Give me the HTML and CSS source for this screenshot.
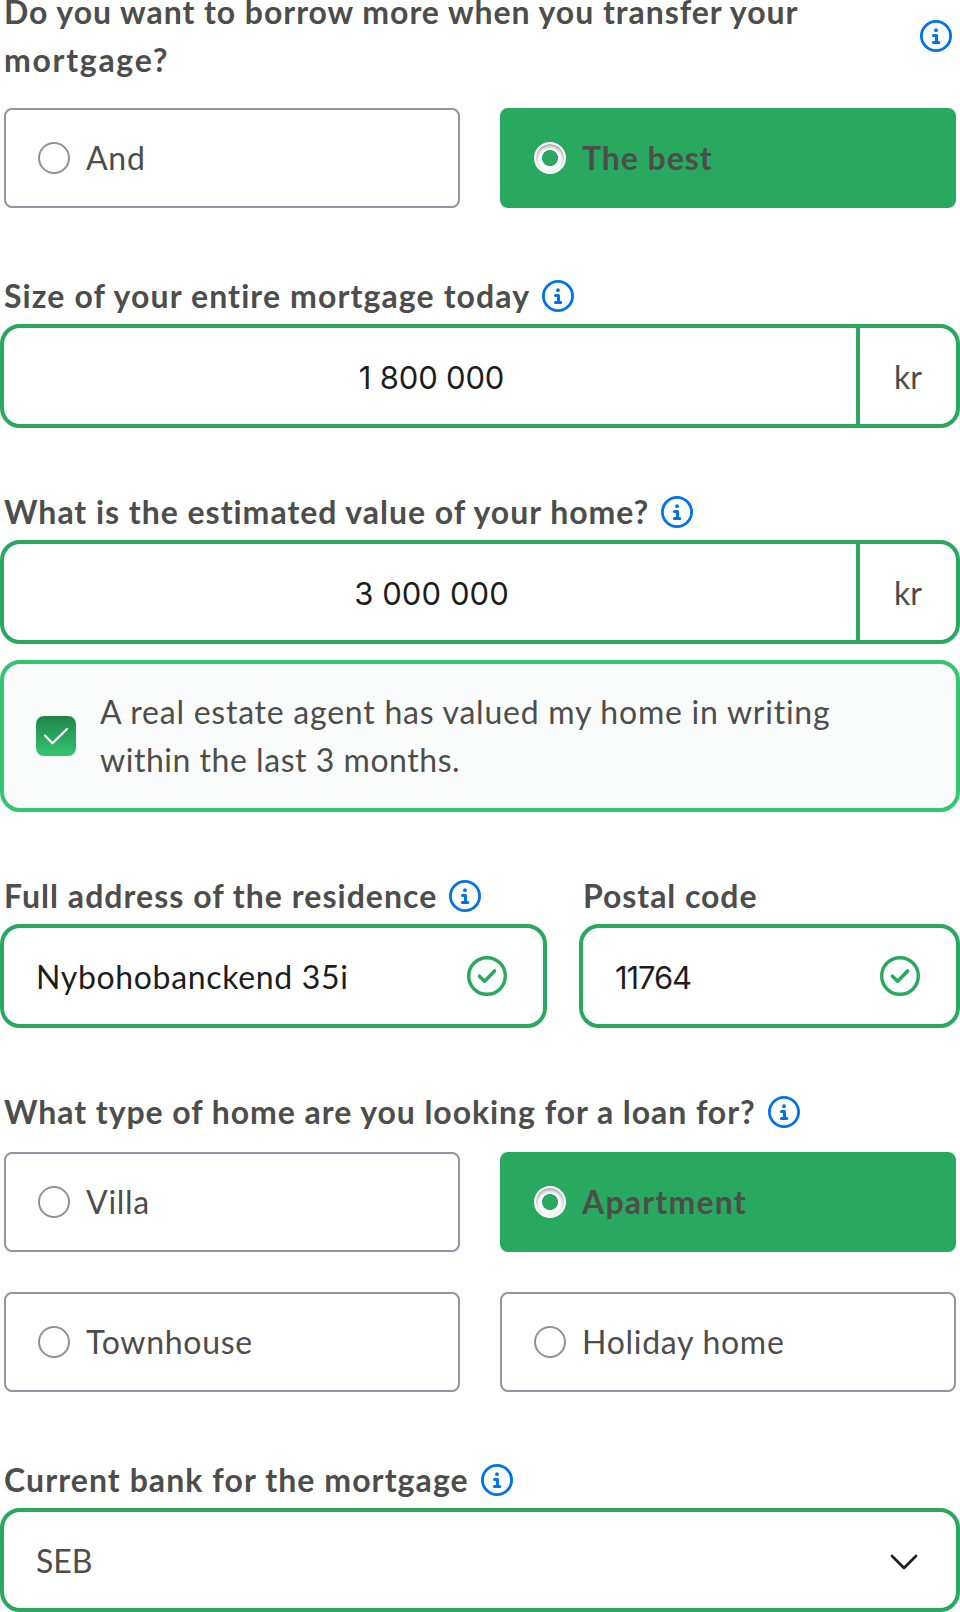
FILE: index.html
```html
<!DOCTYPE html>
<html lang="en">
<head>
<meta charset="utf-8">
<title>Mortgage application</title>
<link rel="stylesheet" href="styles.css">
</head>
<body>
<svg class="defs" width="0" height="0" aria-hidden="true">
  <symbol id="info" viewBox="0 0 32 32">
    <circle cx="16" cy="16" r="14.6" fill="none" stroke="currentColor" stroke-width="2.8"/>
    <circle cx="16" cy="10.2" r="1.9" fill="currentColor"/>
    <path d="M13.5 15.500h3v7M13.400 22.600h5.400" fill="none" stroke="currentColor" stroke-width="3" stroke-linecap="round" stroke-linejoin="round"/>
  </symbol>
  <symbol id="valid" viewBox="0 0 40 40">
    <circle cx="20" cy="20" r="18.3" fill="none" stroke="currentColor" stroke-width="3.4"/>
    <path d="M12.400 20.200l5.200 5L27.600 15" fill="none" stroke="currentColor" stroke-width="3.6" stroke-linecap="round" stroke-linejoin="round"/>
  </symbol>
</svg>
<main class="form">
  <section class="group">
    <div class="label label-wide"><span class="q-text"><span class="t-borrow">Do you want to borrow more when you transfer your</span><br><span class="t-mortgage">mortgage?</span></span><svg class="info"><use href="#info"/></svg></div>
    <div class="options options-first">
      <div class="option"><span class="radio"></span><span>And</span></div>
      <div class="option selected"><span class="radio"></span><span>The best</span></div>
    </div>
  </section>

  <section class="group after-options">
    <div class="label"><span class="t-size">Size of your entire mortgage today</span><svg class="info"><use href="#info"/></svg></div>
    <div class="field amount"><span class="number n-size">1 800 000</span><span class="unit">kr</span></div>
  </section>

  <section class="group">
    <div class="label"><span class="t-value">What is the estimated value of your home?</span><svg class="info"><use href="#info"/></svg></div>
    <div class="field amount"><span class="number n-value">3 000 000</span><span class="unit">kr</span></div>
    <div class="consent">
      <span class="checkbox"><svg viewBox="0 0 40 40" width="40" height="40"><path d="M9 19.500l7.500 7.800L31 13" fill="none" stroke="#fff" stroke-width="2.200" stroke-linecap="round" stroke-linejoin="round"/></svg></span>
      <span class="consent-text"><span class="t-agent">A real estate agent has valued my home in writing</span><br>within the last 3 months.</span>
    </div>
  </section>

  <section class="group address">
    <div>
      <div class="label"><span class="t-address">Full address of the residence</span><svg class="info"><use href="#info"/></svg></div>
      <div class="field text"><span class="entry">Nybohobanckend 35i</span><svg class="valid"><use href="#valid"/></svg></div>
    </div>
    <div>
      <div class="label"><span>Postal code</span></div>
      <div class="field text"><span class="entry postal">11764</span><svg class="valid"><use href="#valid"/></svg></div>
    </div>
  </section>

  <section class="group">
    <div class="label"><span>What type of home are you looking for a loan for?</span><svg class="info"><use href="#info"/></svg></div>
    <div class="options options-home">
      <div class="option"><span class="radio"></span><span>Villa</span></div>
      <div class="option selected"><span class="radio"></span><span class="t-apartment">Apartment</span></div>
      <div class="option"><span class="radio"></span><span>Townhouse</span></div>
      <div class="option"><span class="radio"></span><span>Holiday home</span></div>
    </div>
  </section>

  <section class="group after-options">
    <div class="label"><span class="t-bank">Current bank for the mortgage</span><svg class="info"><use href="#info"/></svg></div>
    <div class="field text select"><span class="bank">SEB</span><svg class="chevron" viewBox="0 0 28 16"><path d="M2 2l12 12L26 2" fill="none" stroke="currentColor" stroke-width="2.700" stroke-linecap="round" stroke-linejoin="round"/></svg></div>
  </section>
</main>
</body>
</html>
```
FILE: styles.css
```css
* { box-sizing: border-box; }

html { overflow: hidden; }

body {
  margin: 0;
  background: #fff;
  color: #4d4d4c;
  font: 32px/48px Lato, "Open Sans", sans-serif;
  letter-spacing: 0.72px;
  white-space: nowrap;
}

svg { display: block; flex: none; }
.defs { position: absolute; }

.form { display: flow-root; width: 960px; }
.group { margin-top: 60px; }
.group.after-options { margin-top: 64px; }
.group:first-child { margin-top: -12px; }

.label {
  display: flex;
  align-items: center;
  gap: 12px;
  padding-left: 4px;
  margin-bottom: 4px;
  font-weight: 700;
  letter-spacing: 0.94px;
}
.label-wide { justify-content: space-between; padding-right: 8px; }
.info { width: 32px; height: 32px; color: #0073eb; }
.label-wide .info { margin-top: 0; }

.t-borrow { letter-spacing: 0.95px; }
.t-mortgage { letter-spacing: 1.7px; }
.t-size { letter-spacing: 1.11px; }
.t-address { letter-spacing: 1.03px; }
.t-value { letter-spacing: 0.97px; }
.t-bank { letter-spacing: 1.08px; }

.options {
  display: grid;
  grid-template-columns: 1fr 1fr;
  gap: 40px;
  padding: 0 4px;
}
.options-first { margin-top: 24px; }
.options-home { margin-top: 16px; }

.option {
  display: flex;
  align-items: center;
  gap: 16px;
  height: 100px;
  padding-left: 32px;
  border: 2px solid #9193a6;
  border-radius: 8px;
}
.option.selected {
  border-color: #29a95f;
  background: #29a95f;
  font-weight: 700;
  letter-spacing: 0.95px;
}
.option .t-apartment { letter-spacing: 1.2px; }

.radio {
  width: 32px;
  height: 32px;
  border: 2px solid #919191;
  border-radius: 50%;
  background: #fff;
}
.selected .radio {
  border-color: #fff;
  background: radial-gradient(circle, #29a95f 7.700px, transparent 8.300px), #fff;
  box-shadow: inset 0 2px 4px rgba(0, 0, 0, 0.42);
}

.field {
  display: flex;
  align-items: center;
  height: 104px;
  border: 4px solid #29a95f;
  border-radius: 20px;
}
.number, .entry { color: #1d1d1d; }
.number {
  flex: 1;
  padding: 4px 0 0 3px;
  text-align: center;
  font-family: Inter, sans-serif;
  font-size: 31px;
}
.n-size { letter-spacing: -0.18px; }
.n-value { letter-spacing: 0.08px; }
.unit {
  display: flex;
  align-items: center;
  justify-content: center;
  width: 100px;
  height: 100%;
  padding-top: 2px;
  border-left: 4px solid #29a95f;
  letter-spacing: 0;
}

.consent {
  display: flex;
  align-items: center;
  gap: 24px;
  height: 152px;
  margin-top: 16px;
  padding-left: 32px;
  border: 4px solid #32c671;
  border-radius: 20px;
  background: #fafcfb;
}
.checkbox {
  width: 40px;
  height: 40px;
  border-radius: 8px;
  background: linear-gradient(#208449, #32c671);
}
.consent-text { margin-top: -1px; letter-spacing: 0.53px; }
.t-agent { letter-spacing: 0.76px; }

.address {
  display: grid;
  grid-template-columns: 547px 381px;
  gap: 32px;
}
.text { justify-content: space-between; padding: 0 36px 0 32px; }
.entry { padding-top: 2px; letter-spacing: 0.66px; }
.postal {
  padding-top: 4px;
  font-family: Inter, sans-serif;
  font-size: 31px;
  letter-spacing: -1.1px;
}
.valid { width: 40px; height: 40px; color: #29a95f; }

.select { padding-right: 38px; }
.bank { padding-top: 2px; letter-spacing: -0.1px; }
.chevron { width: 28px; height: 16px; margin-top: 4px; color: #1d1d1d; }
```
